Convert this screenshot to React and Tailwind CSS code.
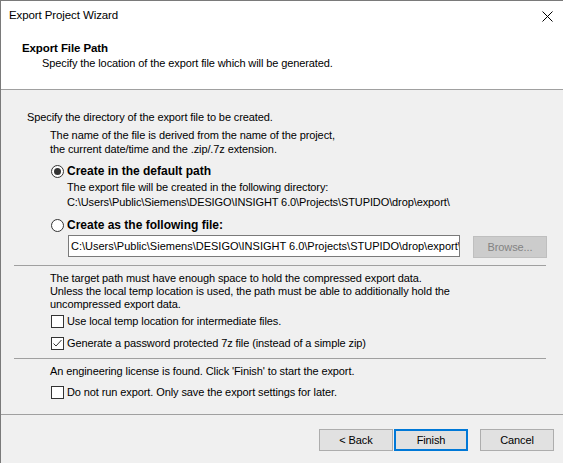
const Radio = ({ checked }) => (
  <span className="w-[13px] h-[13px] rounded-full border border-[#333] bg-white flex items-center justify-center shrink-0">
    {checked && <span className="w-[7px] h-[7px] rounded-full bg-[#333]" />}
  </span>
);

const Check = ({ checked }) => (
  <span className="w-[13px] h-[13px] border border-[#333] bg-white flex items-center justify-center shrink-0">
    {checked && (
      <svg width="11" height="11" viewBox="0 0 11 11">
        <polyline points="1.5,5.5 4,8 9.5,2" fill="none" stroke="#333" strokeWidth="1" />
      </svg>
    )}
  </span>
);

const Button = ({ children, primary, disabled }) => (
  <button
    className={
      "w-[74px] h-[22px] flex items-center justify-center " +
      (primary
        ? "border-2 border-[#0078d7] bg-[#e1e1e1] text-black"
        : disabled
        ? "border border-[#bfbfbf] bg-[#cccccc] text-[#838383]"
        : "border border-[#adadad] bg-[#e1e1e1] text-black")
    }
  >
    {children}
  </button>
);

export default function App() {
  return (
    <div className="w-[563px] h-[463px] bg-[#f0f0f0] border-l border-t border-[#7a7a7a] flex flex-col overflow-hidden text-[11px] tracking-[-0.1px] text-black font-['Liberation_Sans',sans-serif]">
      {/* header */}
      <div className="h-[89px] bg-white border-b border-[#a0a0a0] flex flex-col shrink-0">
        <div className="h-[30px] flex items-center justify-between pl-[8px] pr-[8px]">
          <span className="text-[11.5px]">Export Project Wizard</span>
          <svg width="11" height="11" viewBox="0 0 11 11" className="mr-[2px]">
            <path d="M0.5 0.5 L10.5 10.5 M10.5 0.5 L0.5 10.5" stroke="#000" strokeWidth="1" />
          </svg>
        </div>
        <div className="mt-[10px] pl-[21px] leading-[14px] font-bold text-[11.5px]">Export File Path</div>
        <div className="mt-[1px] pl-[41px] leading-[14px]">
          Specify the location of the export file which will be generated.
        </div>
      </div>

      {/* body */}
      <div className="pt-[20px] pl-[26px] leading-[14px]">Specify the directory of the export file to be created.</div>
      <div className="mt-[4px] pl-[49px] leading-[14px]">
        <div>The name of the file is derived from the name of the project,</div>
        <div>the current date/time and the .zip/.7z extension.</div>
      </div>

      <div className="mt-[8px] pl-[50px] flex items-center gap-[3px] h-[14px]">
        <Radio checked />
        <span className="font-bold text-[12px] tracking-normal">Create in the default path</span>
      </div>
      <div className="mt-[2px] pl-[66px] leading-[15px]">
        <div>The export file will be created in the following directory:</div>
        <div className="whitespace-nowrap">C:\Users\Public\Siemens\DESIGO\INSIGHT 6.0\Projects\STUPIDO\drop\export\</div>
      </div>

      <div className="mt-[8px] pl-[50px] flex items-center gap-[3px] h-[14px]">
        <Radio />
        <span className="font-bold text-[12px] tracking-normal">Create as the following file:</span>
      </div>
      <div className="mt-[3px] pl-[67px] flex items-start gap-[13px]">
        <div className="w-[392px] h-[22px] border border-[#7a7a7a] bg-white flex items-center pl-[2px] overflow-hidden whitespace-nowrap tracking-normal">
          C:\Users\Public\Siemens\DESIGO\INSIGHT 6.0\Projects\STUPIDO\drop\export\
        </div>
        <div className="mt-[1px]">
          <Button disabled>Browse...</Button>
        </div>
      </div>

      <div className="mt-[7px] ml-[13px] w-[532px] border-t border-[#a0a0a0]" />

      <div className="mt-[6px] pl-[49px] leading-[13px]">
        <div>The target path must have enough space to hold the compressed export data.</div>
        <div>Unless the local temp location is used, the path must be able to additionally hold the</div>
        <div>uncompressed export data.</div>
      </div>

      <div className="mt-[4px] pl-[50px] flex items-center gap-[3px] h-[13px]">
        <Check />
        <span>Use local temp location for intermediate files.</span>
      </div>
      <div className="mt-[9px] pl-[50px] flex items-center gap-[3px] h-[13px]">
        <Check checked />
        <span>Generate a password protected 7z file (instead of a simple zip)</span>
      </div>

      <div className="mt-[8px] ml-[13px] w-[532px] border-t border-[#a0a0a0]" />

      <div className="mt-[5px] pl-[49px] leading-[14px]">
        An engineering license is found. Click 'Finish' to start the export.
      </div>
      <div className="mt-[8px] pl-[50px] flex items-center gap-[3px] h-[13px]">
        <Check />
        <span>Do not run export. Only save the export settings for later.</span>
      </div>

      <div className="mt-[15px] border-t border-[#a0a0a0]" />

      <div className="mt-[14px] flex justify-end pr-[9px]">
        <Button>&lt; Back</Button>
        <div className="ml-[1px]">
          <Button primary>Finish</Button>
        </div>
        <div className="ml-[12px]">
          <Button>Cancel</Button>
        </div>
      </div>
    </div>
  );
}
